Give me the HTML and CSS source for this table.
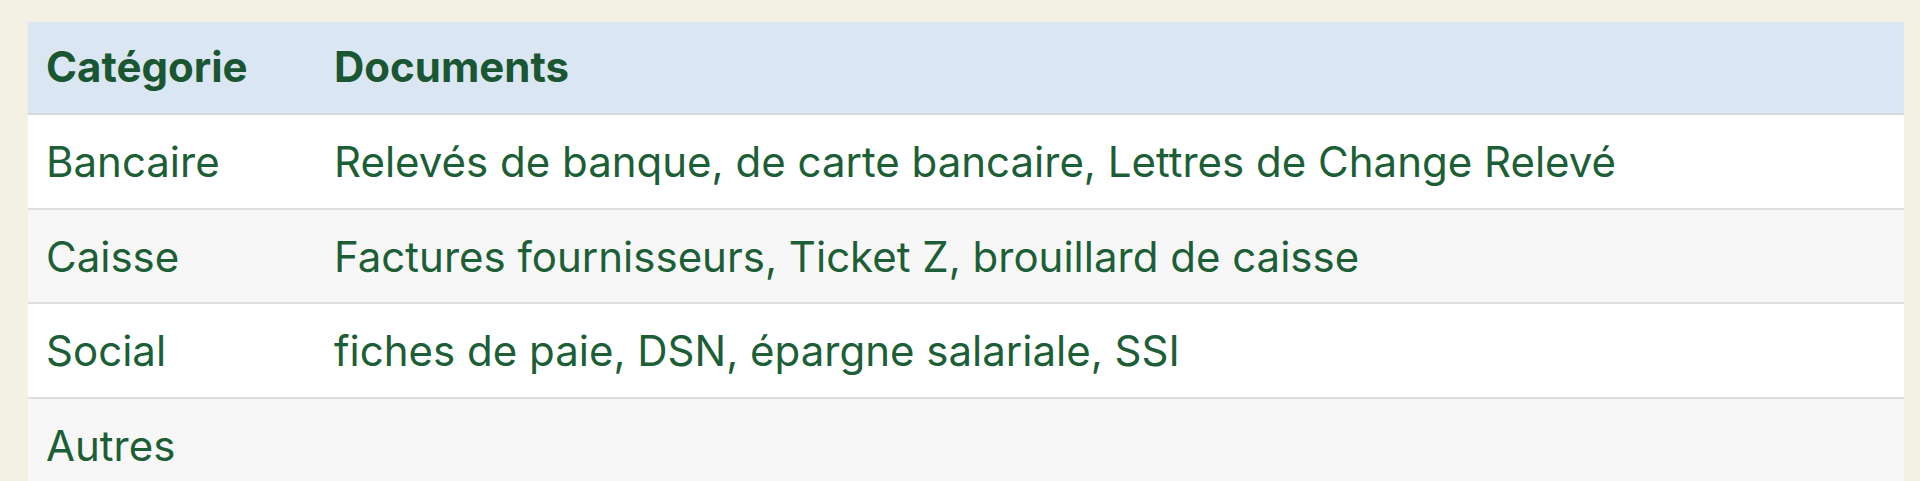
FILE: index.html
```html
<!DOCTYPE html>
<html lang="fr">
<head>
<meta charset="utf-8">
<title>Documents</title>
<link rel="stylesheet" href="styles.css">
</head>
<body>
<table class="doc-table">
  <thead>
    <tr>
      <th class="col-cat">Catégorie</th>
      <th>Documents</th>
    </tr>
  </thead>
  <tbody>
    <tr>
      <td class="col-cat">Bancaire</td>
      <td>Relevés de banque, de carte bancaire, Lettres de Change Relevé</td>
    </tr>
    <tr>
      <td class="col-cat">Caisse</td>
      <td>Factures fournisseurs, Ticket Z, brouillard de caisse</td>
    </tr>
    <tr>
      <td class="col-cat">Social</td>
      <td>fiches de paie, DSN, épargne salariale, SSI</td>
    </tr>
    <tr>
      <td class="col-cat">Autres</td>
      <td></td>
    </tr>
  </tbody>
</table>
</body>
</html>
```

FILE: styles.css
```css
html, body {
  margin: 0;
  background: #f3f0e4;
}
body {
  padding: 22px 16px 0 28px;
  font-family: Inter, "Noto Sans", sans-serif;
  color: #1c5e35;
}
.doc-table {
  width: 100%;
  border-collapse: collapse;
  font-size: 42px;
}
.doc-table th,
.doc-table td {
  text-align: left;
  padding: 0 18px;
  vertical-align: middle;
  line-height: 1.2;
}
.doc-table th {
  background: #dae7f3;
  height: 91px;
  font-weight: 700;
  color: #1a5631;
  border-bottom: 2px solid #d4dadb;
}
.doc-table td {
  height: 90.5px;
  padding-top: 2px;
  font-weight: 400;
  border-bottom: 2px solid #dcdfdf;
}
.doc-table .col-cat {
  width: 252px;
}
.doc-table tbody tr:nth-child(odd) td {
  background: #ffffff;
}
.doc-table tbody tr:nth-child(even) td {
  background: #f7f7f7;
}
```
